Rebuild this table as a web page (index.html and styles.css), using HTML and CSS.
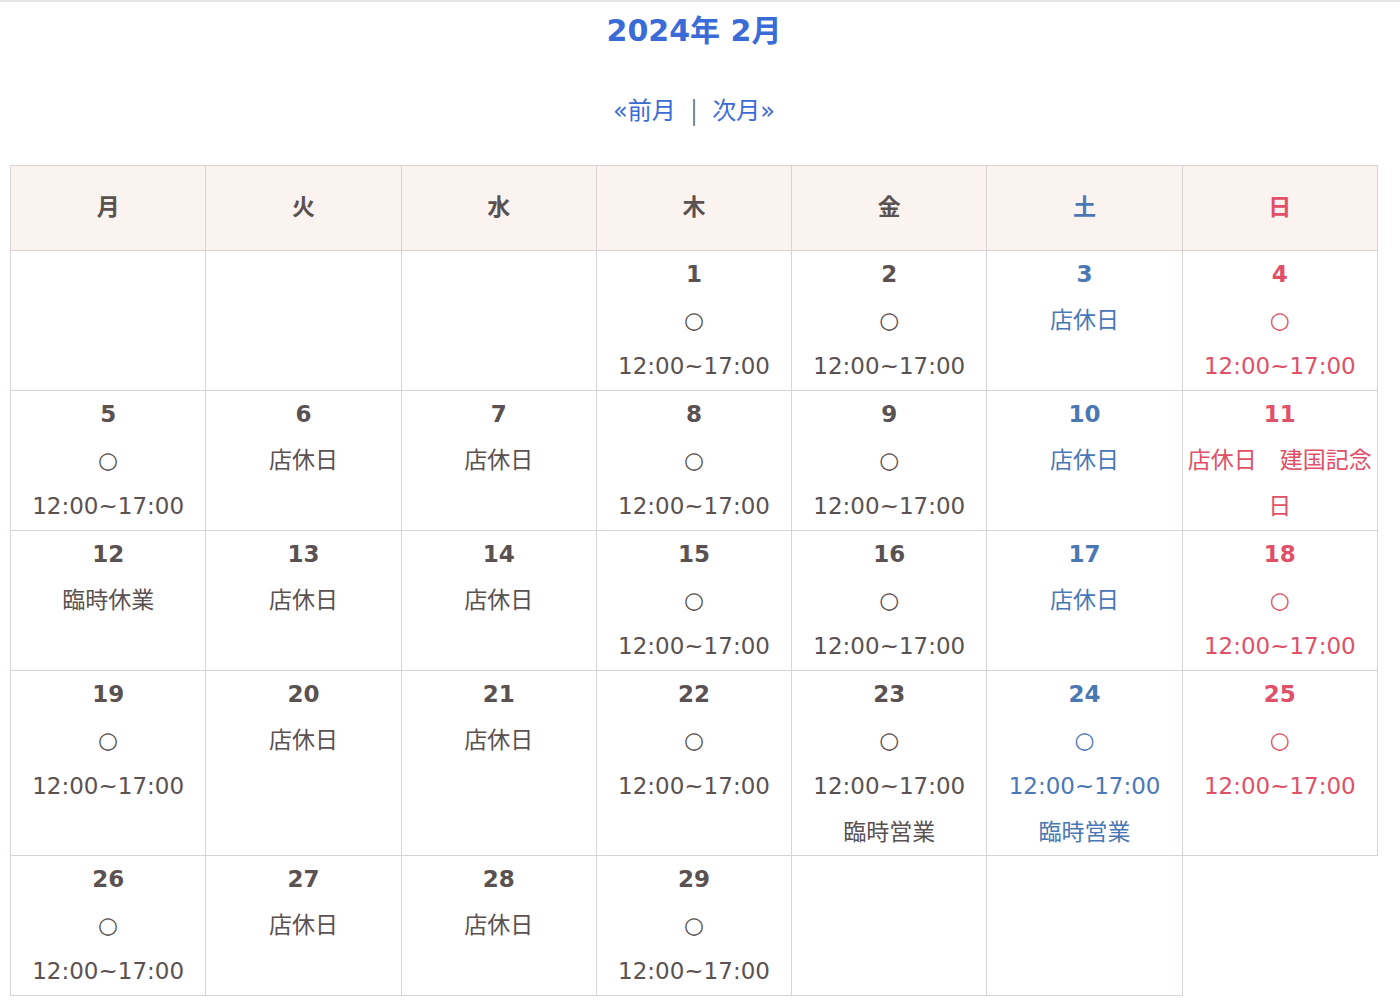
FILE: index.html
```html
<!DOCTYPE html>
<html lang="ja">
<head>
  <meta charset="UTF-8" />
  <title>営業カレンダー</title>
  <link rel="stylesheet" href="styles.css">
</head>
<body>
  <div class="wrap">
    <h2 class="month">2024年 2月</h2>
    <p class="nav"><a href="#">«前月</a><span class="sep">|</span><a href="#">次月»</a></p>

    <table class="cal">
      <tr>
        <th>月</th><th>火</th><th>水</th><th>木</th><th>金</th><th class="sat">土</th><th class="sun">日</th>
      </tr>
      <tr>
        <td></td><td></td><td></td>
        <td><b>1</b><br>○<br>12:00~17:00</td>
        <td><b>2</b><br>○<br>12:00~17:00</td>
        <td class="sat"><b>3</b><br>店休日</td>
        <td class="sun"><b>4</b><br>○<br>12:00~17:00</td>
      </tr>
      <tr>
        <td><b>5</b><br>○<br>12:00~17:00</td>
        <td><b>6</b><br>店休日</td>
        <td><b>7</b><br>店休日</td>
        <td><b>8</b><br>○<br>12:00~17:00</td>
        <td><b>9</b><br>○<br>12:00~17:00</td>
        <td class="sat"><b>10</b><br>店休日</td>
        <td class="sun"><b>11</b><br>店休日　建国記念日</td>
      </tr>
      <tr>
        <td><b>12</b><br>臨時休業</td>
        <td><b>13</b><br>店休日</td>
        <td><b>14</b><br>店休日</td>
        <td><b>15</b><br>○<br>12:00~17:00</td>
        <td><b>16</b><br>○<br>12:00~17:00</td>
        <td class="sat"><b>17</b><br>店休日</td>
        <td class="sun"><b>18</b><br>○<br>12:00~17:00</td>
      </tr>
      <tr>
        <td><b>19</b><br>○<br>12:00~17:00</td>
        <td><b>20</b><br>店休日</td>
        <td><b>21</b><br>店休日</td>
        <td><b>22</b><br>○<br>12:00~17:00</td>
        <td><b>23</b><br>○<br>12:00~17:00<br>臨時営業</td>
        <td class="sat"><b>24</b><br>○<br>12:00~17:00<br>臨時営業</td>
        <td class="sun"><b>25</b><br>○<br>12:00~17:00</td>
      </tr>
      <tr>
        <td><b>26</b><br>○<br>12:00~17:00</td>
        <td><b>27</b><br>店休日</td>
        <td><b>28</b><br>店休日</td>
        <td><b>29</b><br>○<br>12:00~17:00</td>
        <td></td><td></td>
      </tr>
    </table>
  </div>
</body>
</html>
```

FILE: styles.css
```css
body {
  margin: 0;
  border-top: 2px solid #e6e6e6;
  font-family: "DejaVu Sans", "Noto Sans CJK JP", sans-serif;
  color: #5a5151;
  background: #fff;
}
.wrap {
  width: 1368px;
  margin-left: 10px;
}
.month {
  margin: 9px 0 0;
  text-align: center;
  font-size: 30px;
  line-height: 40px;
  font-weight: bold;
  color: #3b6bd6;
}
.nav {
  margin: 36px 0 0;
  text-align: center;
  font-size: 24px;
  line-height: 44px;
}
.nav a {
  color: #3b6bd6;
  text-decoration: none;
}
.sep {
  margin: 0 15px;
  color: #666;
  font-family: "Noto Sans CJK JP", sans-serif;
}
.cal {
  margin-top: 32px;
  border-collapse: collapse;
  table-layout: fixed;
  width: 1368px;
}
.cal th, .cal td {
  border: 1px solid #d9d4d4;
  text-align: center;
  padding: 0;
}
.cal th {
  height: 78px;
  padding-bottom: 6px;
  background: #fbf3f0;
  font-size: 23px;
  font-weight: bold;
}
.cal td {
  height: 139px;
  vertical-align: top;
  font-size: 23px;
  line-height: 46px;
}
.cal td b {
  font-size: 23px;
}
.cal .sat {
  color: #4a78b5;
}
.cal .sun {
  color: #e05068;
}
```
